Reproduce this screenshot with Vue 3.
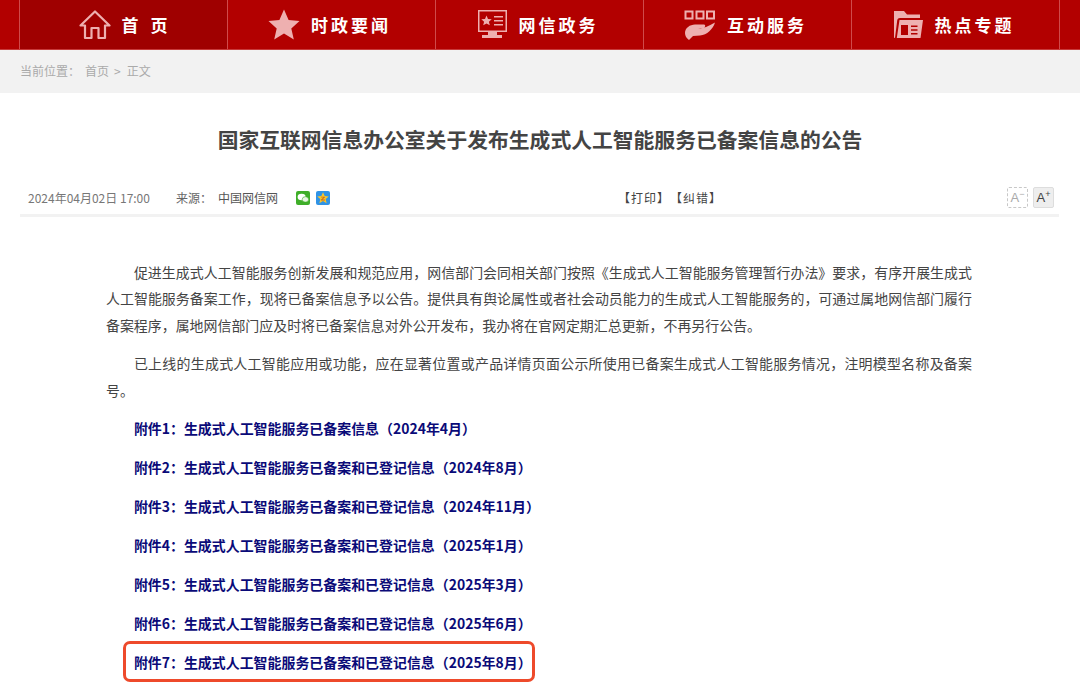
<script setup>
const paras = [
  '促进生成式人工智能服务创新发展和规范应用\uFF0C网信部门会同相关部门按照《生成式人工智能服务管理暂行办法》要求\uFF0C有序开展生成式人工智能服务备案工作\uFF0C现将已备案信息予以公告。提供具有舆论属性或者社会动员能力的生成式人工智能服务的\uFF0C可通过属地网信部门履行备案程序\uFF0C属地网信部门应及时将已备案信息对外公开发布\uFF0C我办将在官网定期汇总更新\uFF0C不再另行公告。',
  '已上线的生成式人工智能应用或功能\uFF0C应在显著位置或产品详情页面公示所使用已备案生成式人工智能服务情况\uFF0C注明模型名称及备案号。'
]
const links = [
  { id: 1, text: '附件1\uFF1A生成式人工智能服务已备案信息\uFF082024年4月\uFF09' },
  { id: 2, text: '附件2\uFF1A生成式人工智能服务已备案和已登记信息\uFF082024年8月\uFF09' },
  { id: 3, text: '附件3\uFF1A生成式人工智能服务已备案和已登记信息\uFF082024年11月\uFF09' },
  { id: 4, text: '附件4\uFF1A生成式人工智能服务已备案和已登记信息\uFF082025年1月\uFF09' },
  { id: 5, text: '附件5\uFF1A生成式人工智能服务已备案和已登记信息\uFF082025年3月\uFF09' },
  { id: 6, text: '附件6\uFF1A生成式人工智能服务已备案和已登记信息\uFF082025年6月\uFF09' },
  { id: 7, text: '附件7\uFF1A生成式人工智能服务已备案和已登记信息\uFF082025年8月\uFF09', mark: true }
]
</script>

<template>
  <div class="page">
    <nav class="nav">
      <a class="item active">
        <svg class="ico" width="32" height="30" viewBox="0 0 32 30" fill="none" stroke="#eeb0b0" stroke-width="2.2" stroke-linejoin="round">
          <path d="M1.5 15.5 16 1.5 30.5 15.5 26 15.5 26 28 19.5 28 19.5 18 12.5 18 12.5 28 6 28 6 15.5Z" />
        </svg>
        <span class="lbl wide">首 页</span>
      </a>
      <a class="item">
        <svg class="ico" width="32" height="32" viewBox="0 0 32 32" fill="#eeb0b0">
          <path d="M16 0.5 20.6 11 31.5 12 23.3 19.4 25.8 30.5 16 24.6 6.2 30.5 8.7 19.4 0.5 12 11.4 11Z" />
        </svg>
        <span class="lbl">时政要闻</span>
      </a>
      <a class="item">
        <svg class="ico" width="31" height="29" viewBox="0 0 31 29" fill="#eeb0b0">
          <path fill-rule="evenodd" d="M1 0H30V22H1ZM2.5 1.5V20.5H28.5V1.5Z" />
          <path d="M9.5 5.5 11 9 14.7 9.3 11.9 11.7 12.8 15.3 9.5 13.4 6.2 15.3 7.1 11.7 4.3 9.3 8 9Z" />
          <path d="M17 6H26V7.6H17ZM17 10H26V11.6H17ZM17 14H26V15.6H17Z" />
          <path d="M11 22H20V25H25V28H5V25H11Z" />
        </svg>
        <span class="lbl">网信政务</span>
      </a>
      <a class="item">
        <svg class="ico" width="32" height="30" viewBox="0 0 32 30">
          <g fill="none" stroke="#eeb0b0" stroke-width="2">
            <rect x="1.5" y="1.5" width="7" height="7" />
            <rect x="12.5" y="1.5" width="7" height="7" />
            <rect x="23" y="1.5" width="7" height="7" />
          </g>
          <path fill="#eeb0b0" d="M1 23C1 18 6 14.5 11 14.5L20 14.5C22 15 21.5 17.5 19 18L14 18.5C18 19 24 16.5 31 12.5C29 19 23 25 16 25.5L9 26 5 30C2.5 28 1 26 1 23Z" />
        </svg>
        <span class="lbl">互动服务</span>
      </a>
      <a class="item">
        <svg class="ico" width="31" height="29" viewBox="0 0 31 29">
          <path fill="#eeb0b0" fill-rule="evenodd" d="M1 1H11L14 4.5H27V8H7C5 8 4.5 9 4.2 10.5L2 28C1.4 28 1 27.5 1 27ZM6.5 10H30L27.5 28H3.8ZM8 15V25H15V15ZM18 15.5V17H24.5V15.5ZM18 19.3V20.8H24.5V19.3ZM18 23V24.5H24.5V23Z" />
        </svg>
        <span class="lbl">热点专题</span>
      </a>
    </nav>

    <div class="crumb">
      <span>当前位置&#xFF1A;</span><span class="home">首页</span><span class="gt">&gt;</span><span>正文</span>
    </div>

    <h1 class="title">国家互联网信息办公室关于发布生成式人工智能服务已备案信息的公告</h1>

    <div class="meta">
      <div class="left">
        <span class="date">2024年04月02日 17:00</span>
        <span class="src">来源&#xFF1A;</span>
        <span class="org">中国网信网</span>
        <svg class="share" width="14" height="14" viewBox="0 0 14 14">
          <rect width="14" height="14" rx="2" fill="#3fae29" />
          <ellipse cx="5.6" cy="6" rx="4" ry="3.3" fill="#fff" />
          <ellipse cx="9.4" cy="8.4" rx="3.2" ry="2.7" fill="#e9f6e4" stroke="#3fae29" stroke-width=".6" />
        </svg>
        <svg class="share second" width="14" height="14" viewBox="0 0 14 14">
          <rect width="14" height="14" rx="2" fill="#2f93e6" />
          <path d="M7 1.2 8.7 5 12.8 5.4 9.7 8.1 10.6 12.2 7 10.1 3.4 12.2 4.3 8.1 1.2 5.4 5.3 5Z" fill="#f7c52c" />
          <path d="M5.2 5.8H8.8V6.6L6.4 8.6H8.9V9.4H5.1V8.6L7.5 6.6H5.2Z" fill="#c8661b" />
        </svg>
      </div>
      <div class="tools">【打印】【纠错】</div>
      <div class="sizes">
        <span class="size minus">A<sup>−</sup></span>
        <span class="size plus">A<sup>+</sup></span>
      </div>
    </div>

    <article class="body">
      <p v-for="(p, i) in paras" :key="i" class="para">{{ p }}</p>
      <p v-for="l in links" :key="l.id" class="para link">
        {{ l.text }}
        <span v-if="l.mark" class="mark"></span>
      </p>
    </article>
  </div>
</template>

<style>
html, body { margin: 0; background: #fff; overflow: hidden; }
</style>

<style scoped>
.page {
  width: 1080px;
  height: 688px;
  overflow: hidden;
  font-family: "Noto Sans CJK SC", "Liberation Sans", sans-serif;
  color: #333;
  text-spacing-trim: space-all;
}
.nav {
  display: flex;
  height: 49px;
  padding-left: 19px;
  background: #b20000;
  border-bottom: 1px solid #c83a3a;
}
.item {
  width: 208px;
  box-sizing: border-box;
  flex: none;
  display: flex;
  align-items: center;
  justify-content: center;
  gap: 11px;
  padding-right: 4px;
  border-left: 1px solid #cf4a4a;
}
.item:last-child { width: 209px; border-right: 1px solid #cf4a4a; }
.active { background: #9f0000; padding-right: 0; }
.ico { flex: none; }
.lbl {
  color: #fff;
  font-size: 17px;
  font-weight: 700;
  letter-spacing: 3px;
  line-height: 47px;
}
.wide { letter-spacing: 1px; word-spacing: 6px; }
.crumb {
  height: 43px;
  box-sizing: border-box;
  padding-bottom: 2px;
  display: flex;
  align-items: center;
  padding-left: 20px;
  background: #f2f2f2;
  font-size: 12px;
  color: #aaa;
}
.home { margin-left: 5px; }
.gt { margin: 0 6px 0 5px; }
.title {
  margin: 0;
  padding-top: 31px;
  text-align: center;
  font-size: 20.8px;
  line-height: 30px;
  font-weight: 700;
  color: #444;
}
.meta {
  display: flex;
  align-items: center;
  margin: 27px 21px 0 20px;
  padding: 0 5px 0 8px;
  height: 36px;
  box-sizing: border-box;
  border-bottom: 3px solid #f2f2f2;
  font-size: 12px;
}
.left { display: flex; align-items: center; width: 590px; flex: none; color: #888; }
.date { color: #777; }
.src { margin-left: 26px; color: #666; }
.org { margin-left: 6px; color: #555; }
.share { margin-left: 18px; }
.share.second { margin-left: 6px; }
.tools { color: #444; letter-spacing: 1px; }
.sizes { display: flex; gap: 5px; margin-left: auto; }
.size {
  width: 21px;
  height: 21px;
  box-sizing: border-box;
  display: flex;
  align-items: center;
  justify-content: center;
  font-family: "Liberation Sans", sans-serif;
  font-size: 13px;
  border-radius: 2px;
}
.size sup { font-size: 9px; line-height: 1; margin-top: -6px; }
.minus { border: 1px dashed #c8c8c8; color: #aaa; }
.plus { border: 1px solid #ddd; background: #eee; color: #444; }
.body { padding: 41.5px 108px 0 106px; }
.para {
  margin: 0 0 12px;
  font-size: 13.95px;
  line-height: 26.5px;
  text-indent: 2em;
  text-align: justify;
  color: #444;
}
.link { position: relative; margin-bottom: 12.5px; color: #0a0a78; font-weight: 700; }
.mark {
  position: absolute;
  left: 17px;
  top: -8px;
  width: 412px;
  height: 41px;
  box-sizing: border-box;
  border: 3px solid #ee4a2b;
  border-radius: 7px;
}
</style>
